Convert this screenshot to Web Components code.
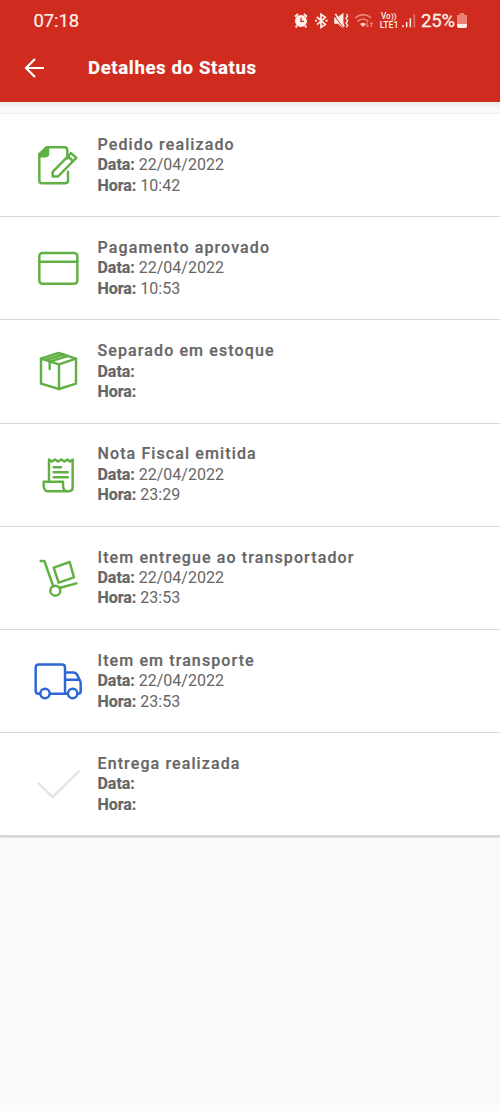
<!DOCTYPE html>
<html lang="pt-BR">
<head>
<meta charset="utf-8">
<title>Detalhes do Status</title>
<style>
html,body{margin:0;background:#fafafa;font-family:Roboto,"Liberation Sans",sans-serif}
</style>
</head>
<body>
<status-screen></status-screen>
<script>
const icons = {
  edit: [-49.5, `<path d="M142 84V59q0-9-9-9H80L58 71v79q0 8 8 8h69q9 0 9-8v-26"/><path d="M84 52v18q0 7-7 7H59L82 52z" fill="currentColor"/><path d="M98 124L153 68l16 14-55 56H98z"/><path d="M144 78l15 14"/>`],
  card: [-55, `<rect x="58" y="53" width="114" height="92" rx="9"/><path d="M58 79h114"/>`],
  box: [-45, `<path d="M63 71l53-17 52 17v75l-51 16-54-16z"/><path d="M63 71l54 17 51-17M117 88v74M89 102V80l54-17M76 75l55-17"/>`],
  invoice: [-50.5, `<path d="M87 121V56l9 6 9-6 9 6 10-6 9 6 9-6 8 6 8-6v84q0 11-11 11H83q-11 0-12-17v-11h58v10q0 18 13 18"/><path d="M101 79h22M101 94h42M101 109h42"/>`],
  dolly: [-56, `<path d="M62 46h11l27 76M118 127l51-14M101 66l48-17 13 46-46 16z"/><circle cx="106" cy="135" r="15"/>`],
  truck: [-46.5, `<path d="M59 145h-3q-9 0-9-9V66q0-9 9-9h70q9 0 9 9v79H91M135 81h25q8 0 12 8l10 21v28q0 7-8 7M135 145h7M139 103h40"/><circle cx="75" cy="144" r="14"/><circle cx="158" cy="144" r="14"/>`],
  check: [-52, `<path d="M55 99l43 41 78-76"/>`]
};

customElements.define('status-bar', class extends HTMLElement {
  constructor() {
    super();
    this.attachShadow({mode: 'open'}).innerHTML = `<style>
:host{display:flex;align-items:center;height:42px;padding:0 33px 0 33.5px;color:#fff0e8;font-size:18.5px;letter-spacing:-.1px;box-sizing:border-box}
time{flex:1;-webkit-text-stroke:.2px currentColor}
.pct{margin-left:0;-webkit-text-stroke:.3px currentColor}
svg{display:block;fill:none;stroke:currentColor}
text{fill:currentColor;stroke:none;font-weight:500}
</style><time><slot></slot></time>
<svg width="130" height="42" viewBox="30 0 390 126" stroke-width="4.6">
<g><circle cx="60" cy="63" r="15" fill="currentColor" stroke="currentColor" stroke-width="6"/><path d="M42 50l9-8M78 50l-9-8M48 77l-4 5M72 77l4 5" stroke-width="6"/><path d="M60 53v11h9" stroke="#cf2b1e" stroke-width="4"/></g>
<path d="M108 51l25 22-13 9V43l13 9-25 22M102 62h6M133 62h7" stroke-width="5"/>
<g><path d="M162 54h9l14-11v38l-14-12h-9z" fill="currentColor"/><path d="M160 47l28 38" stroke="#cf2b1e" stroke-width="3"/><path d="M163 42l27 37"/><path d="M196 42l4 6-5 7 5 7-5 7 5 7-4 6" stroke-width="4"/></g>
<g stroke="#ef8a7c"><path d="M222 54q25-20 49 0M230 64q15-14 32 0"/><path d="M237 72q9-8 18 0l-9 9z" fill="#ffd2c5" stroke="none"/><path d="M259 67v14m-4-5l4 5 4-5M271 81V67m-4 5l4-5 4 5" stroke-width="3"/></g>
<g><text x="300" y="58" font-size="25" textLength="29" lengthAdjust="spacingAndGlyphs">Vo</text><text x="330" y="56" font-size="21" textLength="17" lengthAdjust="spacingAndGlyphs">))</text><text x="296" y="83" font-size="25" textLength="56" lengthAdjust="spacingAndGlyphs">LTE1</text></g>
<path d="M366 76v6M377 66v16M388 55v27"/><path d="M400 43v39" stroke="#e5786b"/>
</svg>
<span class="pct">25%</span>
<svg width="10" height="18" viewBox="0 0 11 18" preserveAspectRatio="none" style="margin:0 0 0 2px" stroke="none"><path d="M3 1h5v2h3v9H0V3h3z" fill="#ec8274" stroke="none"/><path d="M0 12h11v2q0 2-2 2H2q-2 0-2-2z" fill="currentColor" stroke="none"/></svg>`;
  }
});

customElements.define('app-header', class extends HTMLElement {
  constructor() {
    super();
    this.attachShadow({mode: 'open'}).innerHTML = `<style>
:host{display:flex;align-items:center;height:60px;padding:0 24px 8px;box-sizing:border-box;color:#fff}
svg{width:20px;height:20px;margin-right:44px;fill:none;stroke:currentColor;stroke-width:2.2}
h1{margin:0;font-size:18.6px;font-weight:700;line-height:24px;letter-spacing:.62px;-webkit-text-stroke:.2px currentColor}
</style><svg viewBox="0 0 20 20"><path d="M20 10H2M11 1L2 10l9 9"/></svg><h1><slot></slot></h1>`;
  }
});

customElements.define('status-item', class extends HTMLElement {
  connectedCallback() {
    const [top, art] = icons[this.getAttribute('icon')];
    this.attachShadow({mode: 'open'}).innerHTML = `<style>
:host{display:flex;height:103.2px;box-sizing:border-box;border-bottom:1px solid #dadada;color:#666}
svg{flex:none;width:97.5px;height:102px;fill:none;stroke:currentColor;stroke-width:7.4;stroke-linejoin:round;stroke-linecap:round;color:${this.getAttribute('tone') || '#61b044'}}
.text{padding-top:20.8px;font-size:16px;line-height:20.4px}
h2{margin:0;font-size:16px;font-weight:500;line-height:20.4px;letter-spacing:1.11px;-webkit-text-stroke:.2px currentColor}
b{font-weight:700;letter-spacing:-.03px;-webkit-text-stroke:.2px currentColor}
</style><svg viewBox="-60 ${top} 292.5 306">${art}</svg>
<div class="text"><h2><slot></slot></h2><div><b>Data:</b> ${this.getAttribute('date') || ''}</div><div><b>Hora:</b> ${this.getAttribute('time') || ''}</div></div>`;
  }
});

customElements.define('status-screen', class extends HTMLElement {
  constructor() {
    super();
    this.attachShadow({mode: 'open'}).innerHTML = `<style>
:host{display:block;min-height:1111px;background:#fafafa}
header{height:102px;background:#cf2b1e}
main{margin-top:11px;background:#fff;border-top:1px solid #eee;box-shadow:0 1px 2px #bbb}
.shade{height:11px;margin-bottom:-11px;background:linear-gradient(#e9e9ec,#fafafa 65%)}
</style>
<header><status-bar>07:18</status-bar><app-header>Detalhes do Status</app-header></header><div class="shade"></div>
<main>
<status-item icon="edit" date="22/04/2022" time="10:42">Pedido realizado</status-item>
<status-item icon="card" date="22/04/2022" time="10:53">Pagamento aprovado</status-item>
<status-item icon="box">Separado em estoque</status-item>
<status-item icon="invoice" date="22/04/2022" time="23:29">Nota Fiscal emitida</status-item>
<status-item icon="dolly" date="22/04/2022" time="23:53">Item entregue ao transportador</status-item>
<status-item icon="truck" tone="#2c67d5" date="22/04/2022" time="23:53">Item em transporte</status-item>
<status-item icon="check" tone="#e5e5e5">Entrega realizada</status-item>
</main>`;
  }
});
</script>
</body>
</html>
